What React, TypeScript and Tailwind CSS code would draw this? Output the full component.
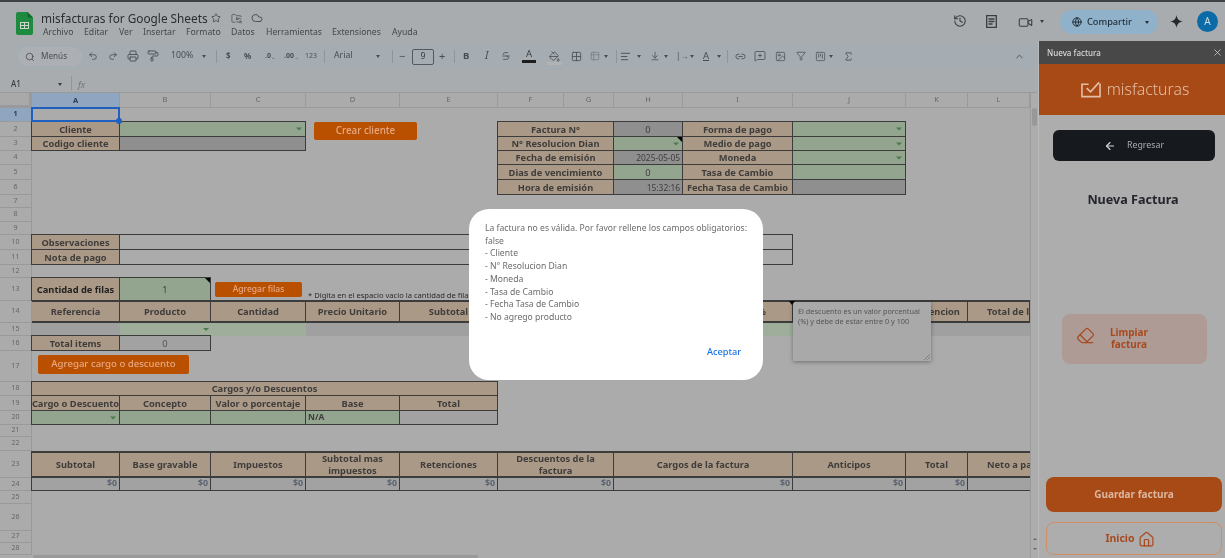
import React from "react";
import { ArrowLeft, ChevronUp, Cloud, Eraser, Filter, Globe, History, House, Link2, MessageSquarePlus, Printer, Redo2, Search, Sigma, Star, SquareKanban, Table2, Undo2, Video, X, Grid2x2, AlignLeft, ArrowDownToLine, PaintRoller, PaintBucket, Strikethrough, FolderSync, Image } from "lucide-react";

const RowHeads: [string, string][] = [
  ["1", "[grid-area:2/1/3/2]"], ["2", "[grid-area:3/1/4/2]"], ["3", "[grid-area:4/1/5/2]"], ["4", "[grid-area:5/1/6/2]"],
  ["5", "[grid-area:6/1/7/2]"], ["6", "[grid-area:7/1/8/2]"], ["7", "[grid-area:8/1/9/2]"], ["8", "[grid-area:9/1/10/2]"],
  ["9", "[grid-area:10/1/11/2]"], ["10", "[grid-area:11/1/12/2]"], ["11", "[grid-area:12/1/13/2]"], ["12", "[grid-area:13/1/14/2]"],
  ["13", "[grid-area:14/1/15/2]"], ["14", "[grid-area:15/1/16/2]"], ["15", "[grid-area:16/1/17/2]"], ["16", "[grid-area:17/1/18/2]"],
  ["17", "[grid-area:18/1/19/2]"], ["18", "[grid-area:19/1/20/2]"], ["19", "[grid-area:20/1/21/2]"], ["20", "[grid-area:21/1/22/2]"],
  ["21", "[grid-area:22/1/23/2]"], ["22", "[grid-area:23/1/24/2]"], ["23", "[grid-area:24/1/25/2]"], ["24", "[grid-area:25/1/26/2]"],
  ["25", "[grid-area:26/1/27/2]"], ["26", "[grid-area:27/1/28/2]"], ["27", "[grid-area:28/1/29/2]"], ["28", "[grid-area:29/1/30/2]"],
];
const ColHeads: [string, string][] = [
  ["B", "[grid-area:1/3/2/4]"], ["C", "[grid-area:1/4/2/5]"], ["D", "[grid-area:1/5/2/6]"], ["E", "[grid-area:1/6/2/7]"], ["F", "[grid-area:1/7/2/8]"],
  ["G", "[grid-area:1/8/2/9]"], ["H", "[grid-area:1/9/2/10]"], ["I", "[grid-area:1/10/2/11]"], ["J", "[grid-area:1/11/2/12]"], ["K", "[grid-area:1/12/2/13]"], ["L", "[grid-area:1/13/2/14]"],
];

const Arrow = () => <span className="absolute right-[3px] top-1/2 -translate-y-1/2 border-x-[3px] border-t-[3px] border-x-transparent border-t-[#4c7a4c]" />;
const Corner = () => <span className="absolute right-0 top-0 border-l-[5px] border-t-[5px] border-l-transparent border-t-black" />;

const C = ({ a, k = "b", arrow, note, r, children }: { a: string; k?: "b" | "g" | "x" | "l" | "n"; arrow?: boolean; note?: boolean; r?: boolean; children?: React.ReactNode }) => {
  const tone = {
    b: "bg-[#ab9987] font-bold text-[#3f3d3b]",
    g: "bg-[#93a58f] text-[#3f3d3b]",
    x: "bg-[#8f8f8f] text-[#3f3d3b]",
    l: "bg-[#a2a2a2] text-[#4b5563]",
    n: "bg-transparent",
  }[k];
  return (
    <div className={`${a} ${tone} relative -ml-px -mt-px flex items-center whitespace-nowrap border border-[#3c3c3c] px-[2px] pt-[1px] text-[9.3px] leading-[12px] ${r ? "justify-end text-right" : "justify-center text-center"}`}>
      {children}
      {arrow && <Arrow />}
      {note && <Corner />}
    </div>
  );
};

const Tool = ({ x, y = "top-[49px]", children }: { x: string; y?: string; children: React.ReactNode }) => (
  <div className={`absolute ${x} ${y} flex h-[14px] items-center justify-center text-[#4a4d50]`}>{children}</div>
);
const Drop = ({ x, y = "top-[55px]" }: { x: string; y?: string }) => <span className={`absolute ${x} ${y} border-x-[2.5px] border-t-[3px] border-x-transparent border-t-[#4a4d50]`} />;
const Sep = ({ x }: { x: string }) => <span className={`absolute ${x} top-[50px] h-[13px] w-px bg-[#8f959a]`} />;
const Menu = ({ x, children }: { x: string; children: React.ReactNode }) => <span className={`absolute ${x} top-[26px] text-[8.7px] leading-[12px] text-[#44474a]`}>{children}</span>;

export default function App() {
  return (
    <div className="relative h-[558px] w-[1225px] overflow-hidden bg-[#ababab] font-['Roboto',sans-serif] blur-[0.5px]">
      {/* top chrome */}
      <div className="absolute left-0 top-0 h-[93px] w-full bg-[#a9acaf]" />
      <div className="absolute left-0 top-0 h-[1.5px] w-full bg-[#3f4144]" />
      <svg className="absolute left-[16px] top-[12px]" width="17" height="23" viewBox="0 0 17 23">
        <path d="M2 0h9.5L17 5.5V21a2 2 0 0 1-2 2H2a2 2 0 0 1-2-2V2a2 2 0 0 1 2-2z" fill="#1d8a3f" />
        <path d="M11.5 0v5.5H17z" fill="#116b2e" />
        <path d="M4 10h9v7H4z M5 11v2h3v-2z M9 11v2h3v-2z M5 14v2h3v-2z M9 14v2h3v-2z" fill="#c9d6cc" fillRule="evenodd" />
      </svg>
      <span className="absolute left-[41px] top-[9px] text-[11.8px] leading-[18px] text-[#2b2d30]">misfacturas for Google Sheets</span>
      <Star className="absolute left-[211px] top-[13px] text-[#44474a]" size={10} strokeWidth={2} />
      <FolderSync className="absolute left-[231px] top-[13px] text-[#44474a]" size={11} strokeWidth={1.6} />
      <Cloud className="absolute left-[251px] top-[12px] text-[#44474a]" size={12} strokeWidth={1.8} />
      <Menu x="left-[43px]">Archivo</Menu>
      <Menu x="left-[84px]">Editar</Menu>
      <Menu x="left-[119px]">Ver</Menu>
      <Menu x="left-[143px]">Insertar</Menu>
      <Menu x="left-[186px]">Formato</Menu>
      <Menu x="left-[231px]">Datos</Menu>
      <Menu x="left-[266px]">Herramientas</Menu>
      <Menu x="left-[332px]">Extensiones</Menu>
      <Menu x="left-[392px]">Ayuda</Menu>

      <History className="absolute left-[953px] top-[14px] text-[#3a3c3f]" size={14} strokeWidth={1.8} />
      <svg className="absolute left-[986px] top-[15px]" width="11" height="13" viewBox="0 0 11 13" fill="none" stroke="#3a3c3f" strokeWidth="1.3">
        <path d="M.7.7h9.6v11.6H.7z" />
        <path d="M2.5 4h6M2.5 6.5h6M2.5 9h4" />
      </svg>
      <Video className="absolute left-[1018px] top-[15px] text-[#3a3c3f]" size={15} strokeWidth={1.7} />
      <span className="absolute left-[1040px] top-[20px] border-x-[2.5px] border-t-[3px] border-x-transparent border-t-[#3a3c3f]" />
      <div className="absolute left-[1060px] top-[10px] flex h-[24px] w-[98px] items-center rounded-full bg-[#8fb1c9] text-[#23303a]">
        <Globe className="ml-[12px]" size={10} strokeWidth={2.4} />
        <span className="ml-[5px] text-[9.2px] font-medium">Compartir</span>
        <span className="ml-[5px] h-full w-px bg-[#a9acaf]" />
        <span className="ml-[7px] border-x-[2.5px] border-t-[3px] border-x-transparent border-t-[#23303a]" />
      </div>
      <svg className="absolute left-[1170px] top-[15px]" width="13" height="13" viewBox="0 0 24 24"><path d="M12 0c1 7 4 11 12 12-8 1-11 5-12 12-1-7-4-11-12-12 8-1 11-5 12-12z" fill="#26282b" /></svg>
      <div className="absolute left-[1197px] top-[11px] flex h-[21px] w-[21px] items-center justify-center rounded-full bg-[#0b6ba6] text-[10px] text-[#cfdbe3]">A</div>

      {/* toolbar */}
      <div className="absolute left-[14px] top-[44px] h-[25px] w-[1040px] rounded-full bg-[#a5adb3]" />
      <div className="absolute left-[18px] top-[47px] flex h-[19px] w-[64px] items-center rounded-full bg-[#acb0b4] pl-[7px] text-[#4a4d50]">
        <Search size={10} strokeWidth={2} />
        <span className="ml-[6px] text-[8.2px]">Menús</span>
      </div>
      <Tool x="left-[88px]"><Undo2 size={10} strokeWidth={2} /></Tool>
      <Tool x="left-[108px]"><Redo2 size={10} strokeWidth={2} /></Tool>
      <Tool x="left-[127px]"><Printer size={12} strokeWidth={1.8} /></Tool>
      <Tool x="left-[147px]"><PaintRoller size={12} strokeWidth={1.8} /></Tool>
      <Tool x="left-[171px]"><span className="text-[8.7px]">100%</span></Tool>
      <Drop x="left-[202px]" />
      <Sep x="left-[216px]" />
      <Tool x="left-[226px]"><span className="text-[8px] font-bold">$</span></Tool>
      <Tool x="left-[244px]"><span className="text-[8px] font-bold">%</span></Tool>
      <Tool x="left-[265px]"><span className="text-[7px] font-bold">.0<sub className="text-[5px]">←</sub></span></Tool>
      <Tool x="left-[284px]"><span className="text-[7px] font-bold">.00<sub className="text-[5px]">→</sub></span></Tool>
      <Tool x="left-[305px]"><span className="text-[7px]">123</span></Tool>
      <Sep x="left-[324px]" />
      <Tool x="left-[334px]"><span className="font-['Liberation_Sans',sans-serif] text-[8.7px]">Arial</span></Tool>
      <Drop x="left-[376px]" />
      <Sep x="left-[392px]" />
      <Tool x="left-[399px]"><span className="text-[11px]">−</span></Tool>
      <div className="absolute left-[412px] top-[49px] flex h-[16px] w-[22px] items-center justify-center rounded-[2px] border border-[#55585c] text-[8.7px] text-[#3a3c3f]">9</div>
      <Tool x="left-[439px]"><span className="text-[11px]">+</span></Tool>
      <Sep x="left-[454px]" />
      <Tool x="left-[463px]"><span className="font-['Liberation_Sans',sans-serif] text-[9.5px] font-bold">B</span></Tool>
      <Tool x="left-[485px]"><span className="font-['Liberation_Serif',serif] text-[10.5px] italic">I</span></Tool>
      <Tool x="left-[501px]"><Strikethrough size={10} strokeWidth={2} /></Tool>
      <div className="absolute left-[522px] top-[48px] flex h-[17px] w-[14px] flex-col items-center text-[#3a3c3f]">
        <span className="text-[9.5px] leading-[12px]">A</span>
        <span className="h-[3px] w-[14px] bg-[#1e1e1e]" />
      </div>
      <Tool x="left-[549px]"><PaintBucket size={11} strokeWidth={1.8} /></Tool>
      <span className="absolute left-[547px] top-[62px] h-[3px] w-[15px] bg-[#b0b2b3]" />
      <Tool x="left-[571px]"><Grid2x2 size={11} strokeWidth={1.8} /></Tool>
      <Tool x="left-[590px]"><Table2 className="opacity-50" size={10} strokeWidth={1.8} /></Tool>
      <Drop x="left-[604px]" />
      <Sep x="left-[616px]" />
      <Tool x="left-[620px]"><AlignLeft size={11} strokeWidth={2} /></Tool>
      <Drop x="left-[637px]" />
      <Tool x="left-[650px]"><ArrowDownToLine size={10} strokeWidth={1.8} /></Tool>
      <Drop x="left-[664px]" />
      <Tool x="left-[676px]"><span className="text-[8px]">|→</span></Tool>
      <Drop x="left-[690px]" />
      <Tool x="left-[703px]"><span className="text-[9.5px] underline">A</span></Tool>
      <Drop x="left-[717px]" />
      <Sep x="left-[727px]" />
      <Tool x="left-[735px]"><Link2 size={11} strokeWidth={1.8} /></Tool>
      <Tool x="left-[754px]"><MessageSquarePlus size={12} strokeWidth={1.6} /></Tool>
      <Tool x="left-[775px]"><Image size={11} strokeWidth={1.6} /></Tool>
      <Tool x="left-[796px]"><Filter size={10} strokeWidth={1.8} /></Tool>
      <Tool x="left-[815px]"><SquareKanban size={11} strokeWidth={1.6} /></Tool>
      <Drop x="left-[829px]" />
      <Tool x="left-[843px]"><Sigma size={11} strokeWidth={1.8} /></Tool>
      <ChevronUp className="absolute left-[1014px] top-[51px] text-[#4a4d50]" size={11} strokeWidth={2} />

      {/* formula bar */}
      <span className="absolute left-[11px] top-[78px] text-[8px] font-medium text-[#3a3c3f]">A1</span>
      <span className="absolute left-[58px] top-[83px] border-x-[2.5px] border-t-[3px] border-x-transparent border-t-[#3a3c3f]" />
      <span className="absolute left-[71px] top-[76px] h-[14px] w-px bg-[#8f959a]" />
      <span className="absolute left-[78px] top-[78px] font-['Liberation_Serif',serif] text-[9px] italic text-[#777]">fx</span>
      <span className="absolute left-0 top-[92px] h-px w-[1037px] bg-[#989a9c]" />

      {/* sheet */}
      <div className="absolute left-0 top-[93px] grid h-[462px] w-[1030px] grid-cols-[32px_88px_91px_95px_94px_98px_66px_50px_69px_110px_113px_62px_62px] grid-rows-[15px_14px_15px_14px_14px_15px_15px_13px_14px_13px_15px_15px_13px_23px_22px_13px_15px_31px_14px_15px_14px_12px_14px_27px_13px_13px_27px_12px_12px] font-['Liberation_Sans',sans-serif]">
        <div className="[grid-area:1/1/2/2] border-b-[3px] border-r-[3px] border-[#989a9c] bg-[#a9a9a9]" />
        <div className="[grid-area:1/2/2/3] flex items-center justify-center border-r border-[#989a9c] bg-[#8fa5c0] text-[7.5px] font-bold text-[#2d3b52]">A</div>
        {ColHeads.map(([t, a]) => (
          <div key={t} className={`${a} flex items-center justify-center border-b border-r border-[#989a9c] text-[7.5px] text-[#666]`}>{t}</div>
        ))}
        {RowHeads.map(([t, a]) => (
          <div key={t} className={`${a} flex items-center justify-center border-b border-r border-[#999] text-[7px] ${t === "1" ? "bg-[#8fa5c0] font-bold text-[#2d3b52]" : "text-[#666]"}`}>{t}</div>
        ))}
        <div className="[grid-area:2/2/3/3] relative z-10 -ml-px -mt-px border-2 border-[#1f5fbf]">
          <span className="absolute -bottom-[4px] -right-[4px] h-[6px] w-[6px] rounded-full bg-[#1f5fbf]" />
        </div>

        <C a="[grid-area:3/2/4/3]">Cliente</C>
        <C a="[grid-area:3/3/4/5]" k="g" arrow />
        <C a="[grid-area:4/2/5/3]">Codigo cliente</C>
        <C a="[grid-area:4/3/5/5]" k="x" />

        <C a="[grid-area:3/7/4/9]">Factura N°</C>
        <C a="[grid-area:3/9/4/10]" k="x">0</C>
        <C a="[grid-area:3/10/4/11]">Forma de pago</C>
        <C a="[grid-area:3/11/4/12]" k="g" arrow />
        <C a="[grid-area:4/7/5/9]">N° Resolucion Dian</C>
        <C a="[grid-area:4/9/5/10]" k="g" arrow note />
        <C a="[grid-area:4/10/5/11]">Medio de pago</C>
        <C a="[grid-area:4/11/5/12]" k="g" arrow />
        <C a="[grid-area:5/7/6/9]">Fecha de emisión</C>
        <C a="[grid-area:5/9/6/10]" k="x" r><span className="text-[8.4px]">2025-05-05</span></C>
        <C a="[grid-area:5/10/6/11]">Moneda</C>
        <C a="[grid-area:5/11/6/12]" k="g" arrow />
        <C a="[grid-area:6/7/7/9]">Dias de vencimiento</C>
        <C a="[grid-area:6/9/7/10]" k="g">0</C>
        <C a="[grid-area:6/10/7/11]">Tasa de Cambio</C>
        <C a="[grid-area:6/11/7/12]" k="g" />
        <C a="[grid-area:7/7/8/9]">Hora de emisión</C>
        <C a="[grid-area:7/9/8/10]" k="x" r><span className="text-[8.4px]">15:32:16</span></C>
        <C a="[grid-area:7/10/8/11]">Fecha Tasa de Cambio</C>
        <C a="[grid-area:7/11/8/12]" k="x" />

        <C a="[grid-area:11/2/12/3]">Observaciones</C>
        <C a="[grid-area:11/3/12/11]" k="n" />
        <C a="[grid-area:12/2/13/3]">Nota de pago</C>
        <C a="[grid-area:12/3/13/11]" k="n" />

        <C a="[grid-area:14/2/15/3]"><span className="text-[#1f1f1f]">Cantidad de filas</span></C>
        <C a="[grid-area:14/3/15/4]" k="g" note>1</C>

        {[
          ["Referencia", "[grid-area:15/2/16/3] justify-center"], ["Producto", "[grid-area:15/3/16/4] justify-center"], ["Cantidad", "[grid-area:15/4/16/5] justify-center"],
          ["Precio Unitario", "[grid-area:15/5/16/6] justify-center"], ["Subtotal", "[grid-area:15/6/16/7] justify-center"], ["", "[grid-area:15/7/16/10]"],
          ["%", "[grid-area:15/10/16/11] justify-end pr-[26px]"], ["", "[grid-area:15/11/16/12]"], ["Retencion", "[grid-area:15/12/16/13] justify-center"], ["Total de linea", "[grid-area:15/13/16/14] pl-[19px]"],
        ].map(([t, a]) => (
          <div key={a} className={`${a} relative -mt-px flex items-center overflow-hidden whitespace-nowrap border-b-2 border-r border-t-2 border-[#3c3c3c] bg-[#ab9987] text-[9.3px] font-bold text-[#3f3d3b]`}>{t}</div>
        ))}
        <div className="[grid-area:16/2/17/3] bg-[#a0a0a0]" />
        <div className="[grid-area:16/3/17/5] relative bg-[#9fae9b]"><span className="absolute left-[83px] top-[5px] border-x-[3px] border-t-[3px] border-x-transparent border-t-[#4c7a4c]" /></div>
        <div className="[grid-area:16/5/17/10] bg-[#a0a0a0]" />
        <div className="[grid-area:16/10/17/11] bg-[#9fae9b]" />
        <div className="[grid-area:16/11/17/14] bg-[#a0a0a0]" />
        <C a="[grid-area:17/2/18/3]">Total items</C>
        <C a="[grid-area:17/3/18/4]" k="l"><span className="text-[#555]">0</span></C>

        <C a="[grid-area:19/2/20/7]">Cargos y/o Descuentos</C>
        <C a="[grid-area:20/2/21/3]">Cargo o Descuento</C>
        <C a="[grid-area:20/3/21/4]">Concepto</C>
        <C a="[grid-area:20/4/21/5]">Valor o porcentaje</C>
        <C a="[grid-area:20/5/21/6]">Base</C>
        <C a="[grid-area:20/6/21/7]">Total</C>
        <C a="[grid-area:21/2/22/3]" k="g" arrow />
        <C a="[grid-area:21/3/22/4]" k="g" />
        <C a="[grid-area:21/4/22/5]" k="g" />
        <div className="[grid-area:21/5/22/6] relative -ml-px -mt-px flex items-center border border-[#3c3c3c] bg-[#93a58f] pl-[2px] text-[8.5px] font-bold text-[#3f3d3b]">N/A</div>
        <C a="[grid-area:21/6/22/7]" k="l" />

        {[
          ["Subtotal", "[grid-area:24/2/25/3]"], ["Base gravable", "[grid-area:24/3/25/4]"], ["Impuestos", "[grid-area:24/4/25/5]"], ["Subtotal mas impuestos", "[grid-area:24/5/25/6]"],
          ["Retenciones", "[grid-area:24/6/25/7]"], ["Descuentos de la factura", "[grid-area:24/7/25/9]"], ["Cargos de la factura", "[grid-area:24/9/25/11]"], ["Anticipos", "[grid-area:24/11/25/12]"], ["Total", "[grid-area:24/12/25/13]"],
        ].map(([t, a]) => (
          <div key={a} className={`${a} -ml-px flex items-center justify-center border-x border-y-2 border-[#3c3c3c] bg-[#ab9987] px-[8px] text-center text-[9.3px] font-bold leading-[11.5px] text-[#3f3d3b]`}>{t}</div>
        ))}
        <div className="[grid-area:24/13/25/14] -ml-px flex items-center overflow-hidden whitespace-nowrap border-y-2 border-l border-[#3c3c3c] bg-[#ab9987] pl-[19px] text-[9.3px] font-bold text-[#3f3d3b]">Neto a pagar</div>
        {[
          "[grid-area:25/2/26/3]", "[grid-area:25/3/26/4]", "[grid-area:25/4/26/5]", "[grid-area:25/5/26/6]", "[grid-area:25/6/26/7]", "[grid-area:25/7/26/9]", "[grid-area:25/9/26/11]", "[grid-area:25/11/26/12]", "[grid-area:25/12/26/13]",
        ].map((a) => (
          <div key={a} className={`${a} -ml-px flex items-center justify-end border-x border-b border-[#3c3c3c] bg-[#a2a2a2] pr-[2px] text-[8.8px] font-bold text-[#5b6370]`}>$0</div>
        ))}
        <div className="[grid-area:25/13/26/14] -ml-px border-b border-l border-[#3c3c3c] bg-[#a2a2a2]" />
      </div>

      {/* floating sheet buttons */}
      <div className="absolute left-[314px] top-[122px] flex h-[18px] w-[103px] items-center justify-center rounded-[2px] bg-[#b85000] text-[9.8px] font-medium text-[#e8a783]">Crear cliente</div>
      <div className="absolute left-[215px] top-[282px] flex h-[15px] w-[87px] items-center justify-center rounded-[2px] bg-[#b85000] text-[8.5px] font-medium text-[#e8a783]">Agregar filas</div>
      <span className="absolute left-[308px] top-[290px] whitespace-nowrap font-['Liberation_Sans',sans-serif] text-[7.6px] leading-[10px] text-[#2b2b2b]">* Digita en el espacio vacio la cantidad de filas</span>
      <div className="absolute left-[38px] top-[355px] flex h-[19px] w-[151px] items-center justify-center rounded-[2px] bg-[#b85000] text-[9.6px] font-medium text-[#e8a783]">Agregar cargo o descuento</div>

      {/* note */}
      <div className="absolute left-[793px] top-[302px] h-[59px] w-[138px] bg-[#a9a9a9] px-[5px] py-[5px] text-[7.3px] leading-[9.5px] text-[#555] shadow-[0_1px_4px_rgba(0,0,0,0.35)]">
        El descuento es un valor porcentual (%) y debe de estar entre 0 y 100
        <svg className="absolute bottom-[1px] right-[1px]" width="6" height="6" viewBox="0 0 6 6"><path d="M6 0L0 6M6 3L3 6" stroke="#777" strokeWidth="0.8" /></svg>
      </div>
      <span className="absolute left-[789px] top-[301px] border-l-[3px] border-r-[3px] border-t-[4px] border-x-transparent border-t-black" />

      {/* scrollbars */}
      <div className="absolute left-[1030px] top-[93px] h-[465px] w-[7px] border-l border-[#9b9b9b] bg-[#adadad]" />
      <div className="absolute left-[1032px] top-[108px] h-[18px] w-[5px] rounded-full bg-[#989898]" />
      <span className="absolute left-[1033px] top-[538px] border-x-[2px] border-b-[2px] border-x-transparent border-b-[#666]" />
      <span className="absolute left-[1033px] top-[548px] border-x-[2px] border-t-[2px] border-x-transparent border-t-[#666]" />
      <div className="absolute left-[33px] top-[555px] h-[3px] w-[445px] rounded-full bg-[#999]" />

      {/* dialog */}
      <div className="absolute left-[469px] top-[209px] h-[171px] w-[294px] rounded-[20px] bg-white pl-[16px] pt-[13px] text-[8.6px] leading-[12.7px] text-[#6b6b6b]">
        <div className="whitespace-pre-line">{"La factura no es válida. Por favor rellene los campos obligatorios:\nfalse\n- Cliente\n- N° Resolucion Dian\n- Moneda\n- Tasa de Cambio\n- Fecha Tasa de Cambio\n- No agrego producto"}</div>
        <span className="absolute left-[238px] top-[137px] text-[9.2px] font-medium leading-[12px] text-[#1a73e8]">Aceptar</span>
      </div>

      {/* side panel */}
      <div className="absolute left-[1038px] top-[41px] h-[517px] w-[187px] border-l border-[#bbb] bg-[#adadad]">
        <div className="flex h-[23px] items-center justify-between bg-[#484848] pl-[8px] pr-[2px] text-[8px] font-medium text-[#d9d9d9]">
          <span>Nueva factura</span>
          <X size={11} strokeWidth={1.8} className="text-[#c8c8c8]" />
        </div>
        <div className="flex h-[51px] items-center justify-center gap-[6px] bg-[#a84a16] pl-[6px] text-[#e4bda5]">
          <svg width="20" height="17" viewBox="0 0 21 17" fill="none" stroke="currentColor" strokeWidth="1.7">
            <path d="M8 3H1v13h19V3h-1" />
            <path d="M6 7l4 4L19 1" />
          </svg>
          <span className="text-[15.8px] font-light leading-none">misfacturas</span>
        </div>
        <div className="absolute left-[14px] top-[89px] flex h-[31px] w-[162px] items-center justify-center rounded-md bg-[#16191d] text-[#a9adb0]">
          <ArrowLeft size={12} strokeWidth={2.2} className="mr-[11px] text-[#d8d8d8]" />
          <span className="text-[8.8px]">Regresar</span>
        </div>
        <div className="absolute left-[1px] top-[150px] w-full text-center text-[12.6px] font-bold leading-[18px] text-[#23262b]">Nueva Factura</div>
        <div className="absolute left-[23px] top-[273px] h-[50px] w-[145px] rounded-lg bg-[#ae9b96]">
          <Eraser size={19} strokeWidth={1.6} className="absolute left-[14px] top-[12px] text-[#a84a20]" />
          <div className="absolute left-[40px] top-[13px] w-[54px] text-center font-['Noto_Sans',sans-serif] text-[10px] font-bold leading-[11.5px] text-[#a84a20]">Limpiar factura</div>
        </div>
        <div className="absolute left-[7px] top-[436px] flex h-[35px] w-[176px] items-center justify-center rounded-lg bg-[#a84a16] font-['Noto_Sans',sans-serif] text-[10px] font-bold text-[#dbb7a0]">Guardar factura</div>
        <div className="absolute left-[7px] top-[481px] flex h-[33px] w-[176px] items-center justify-center gap-[3px] rounded-lg border border-[#cf8d68] pr-[8px] pt-[1px] font-['Noto_Sans',sans-serif] text-[10.5px] font-bold text-[#a84a20]">
          <span>Inicio</span>
          <House size={17} strokeWidth={1.7} />
        </div>
      </div>
    </div>
  );
}
